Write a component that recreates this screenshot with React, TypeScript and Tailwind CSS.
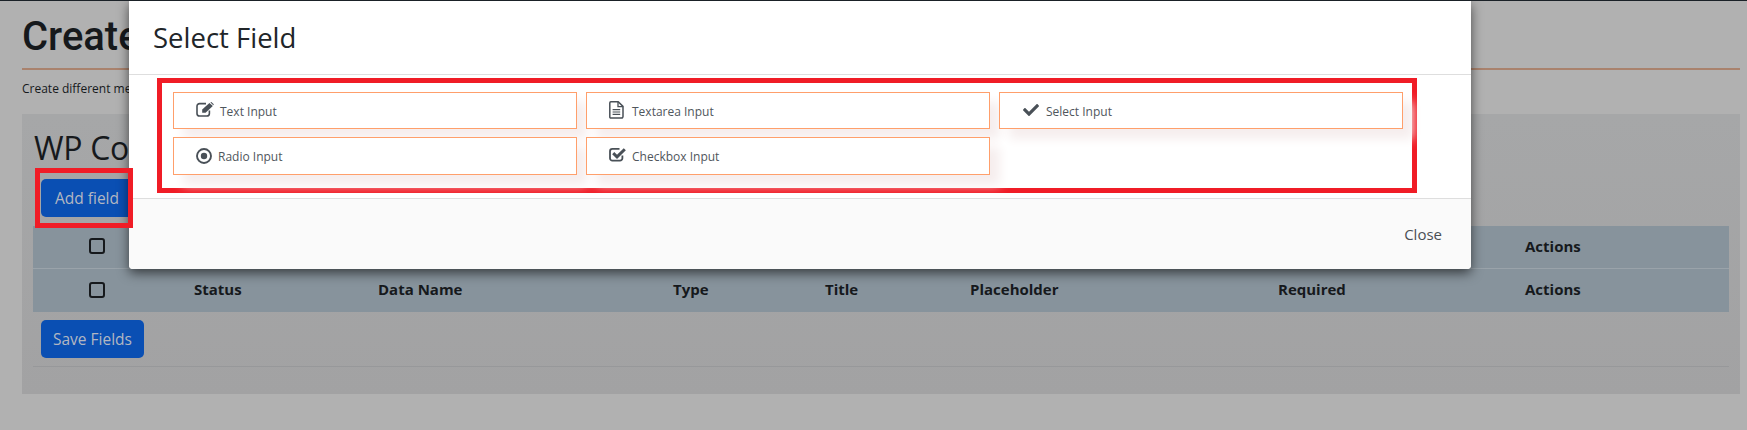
import { FaCheck } from 'react-icons/fa'
import type { ReactNode } from 'react'

const headers = ['Status', 'Data Name', 'Type', 'Title', 'Placeholder', 'Required', 'Actions']

function EditIcon() {
    return (
        <svg width="18" height="15" viewBox="0 0 18 15" fill="none">
            <path d="M10 1.6H3.6A2.6 2.6 0 0 0 1 4.2v7.2A2.6 2.6 0 0 0 3.6 14h7.2a2.6 2.6 0 0 0 2.6-2.6V8.5" stroke="currentColor" strokeWidth="1.6" />
            <path d="M6.2 7.6 13.4 1l3.4 3-7.2 6.8H6.2Z" fill="currentColor" />
            <path d="M14.4 0.4 15.4 0l2.4 2.2-.5 1.1Z" fill="currentColor" />
        </svg>
    )
}

function FileIcon() {
    return (
        <svg width="15" height="18" viewBox="0 0 15 18" fill="none" stroke="currentColor">
            <path d="M1.9 0.8H9.2L14 5.4v10.2a1.5 1.5 0 0 1-1.5 1.5H1.9A1.2 1.2 0 0 1 0.8 15.8V2a1.2 1.2 0 0 1 1.1-1.2Z" strokeWidth="1.5" />
            <path d="M9 1v4.6h5" strokeWidth="1.3" />
            <path d="M3.6 8.6h7.6M3.6 11h7.6M3.6 13.4h7.6" strokeWidth="1.2" />
        </svg>
    )
}

function RadioIcon() {
    return (
        <svg width="16" height="16" viewBox="0 0 16 16" fill="none">
            <circle cx="8" cy="8" r="7" stroke="currentColor" strokeWidth="1.9" />
            <circle cx="8" cy="8" r="3.2" fill="currentColor" />
        </svg>
    )
}

function CheckboxIcon() {
    return (
        <svg width="17" height="15" viewBox="0 0 17 15" fill="none" stroke="currentColor">
            <path d="M10.5 1.8H3.4A2.4 2.4 0 0 0 1 4.2v7a2.4 2.4 0 0 0 2.4 2.4h7.6a2.4 2.4 0 0 0 2.4-2.4V8.5" strokeWidth="1.8" />
            <path d="M4.2 6.2 8 9.8 15.8 2.2" strokeWidth="3" />
        </svg>
    )
}

function HeaderRow() {
    return (
        <div className="grid h-[43px] grid-cols-[161px_184px_295px_152px_145px_308px_247px_1fr] items-center border-b border-[#9aa3aa] bg-[#87939c] pb-[2px] text-[15px] font-bold text-[#16191c] last:border-b-0">
            <div className="pl-[56px]">
                <div className="h-[16px] w-[16px] rounded-[3px] border-2 border-[#16191c]"></div>
            </div>
            {headers.map((h) => (
                <div key={h}>{h}</div>
            ))}
        </div>
    )
}

function FieldButton({ icon, label, iconClass, gap, tall }: { icon: ReactNode; label: string; iconClass: string; gap: string; tall?: boolean }) {
    return (
        <div className={`flex items-center border border-[#ff9f6b] bg-white pl-[22px] text-[12px] text-[#4f565c] shadow-[10px_10px_10px_#f6eeee] ${tall ? 'h-[38px]' : 'h-[37px]'} ${gap}`}>
            <span className={`text-[#495057] ${iconClass}`}>{icon}</span>
            <span className="mt-[2px]">{label}</span>
        </div>
    )
}

export default function App() {
    return (
        <div className="relative h-[430px] w-full overflow-hidden border-t border-[#1a2127] bg-[#b1b1b1] font-['Open_Sans','Noto_Sans',sans-serif] text-[#16191c]">
            <div className="pl-[22px] pr-[7px]">
                <h1 className="h-[67px] pt-[13px] font-['Roboto',sans-serif] text-[40px] font-medium leading-[46px]">Create Form</h1>
                <div className="h-[2px] bg-[#a9826d]"></div>
                <p className="mt-[10px] h-[34px] text-[12px] leading-[18px]">Create different menus and forms</p>
                <div className="h-[280px] bg-gradient-to-b from-[#a6a7a8] to-[#a2a2a3] px-[11px]">
                    <h2 className="h-[65px] pl-[1px] pt-[12px] text-[32px] font-medium leading-[44px] tracking-[-0.3px]">WP Contact Form</h2>
                    <button className="ml-[8px] h-[38px] w-[92px] rounded-[5px] bg-[#0a4fb3] pt-[2px] text-[15.5px] text-[#b2b7c2]">Add field</button>
                    <div className="mt-[9px]">
                        <HeaderRow />
                        <HeaderRow />
                    </div>
                    <button className="ml-[8px] mt-[8px] h-[38px] w-[103px] rounded-[5px] bg-[#0a4fb3] pt-[2px] text-[15.5px] text-[#b2b7c2]">Save Fields</button>
                    <div className="mt-[8px] h-px bg-[#97989a]"></div>
                </div>
            </div>

            {/* annotation around the add button, sits over the modal edge */}
            <div className="absolute left-[35px] top-[167px] z-20 h-[60px] w-[98px] border-[5px] border-[#f01c26]"></div>

            <div className="absolute left-[129px] top-0 z-10 flex h-[268px] w-[1342px] flex-col rounded-b-[4px] bg-white shadow-[0_4px_12px_rgba(0,0,0,0.6)]">
                <div className="h-[74px] border-b border-[#dedede] pl-[24px] pt-[19px] text-[27.5px] leading-[36px] text-[#212529]">Select Field</div>
                <div className="h-[123px] px-[28px] pt-[3px]">
                    <div className="h-[115px] w-[1260px] border-[5px] border-[#f01c26] px-[11px] pt-[9px]">
                        <div className="grid grid-cols-[404px_404px_404px] gap-x-[9px] gap-y-[8px]">
                            <FieldButton icon={<EditIcon />} iconClass="-mt-[3px]" label="Text Input" gap="gap-[6px]" />
                            <FieldButton icon={<FileIcon />} iconClass="-mt-[1px]" label="Textarea Input" gap="gap-[8px]" />
                            <FieldButton icon={<FaCheck size={16} />} iconClass="-mt-[1px] ml-[1px]" label="Select Input" gap="gap-[7px]" />
                            <FieldButton icon={<RadioIcon />} iconClass="-mt-[1px]" label="Radio Input" gap="gap-[6px]" tall />
                            <FieldButton icon={<CheckboxIcon />} iconClass="-mt-[4px]" label="Checkbox Input" gap="gap-[6px]" tall />
                        </div>
                    </div>
                </div>
                <div className="flex flex-1 justify-end rounded-b-[4px] border-t border-[#dedede] bg-[#fafafa] pr-[29px] pt-[25px] text-[15px] leading-[20px] text-[#4a4f54]">Close</div>
            </div>
        </div>
    )
}
